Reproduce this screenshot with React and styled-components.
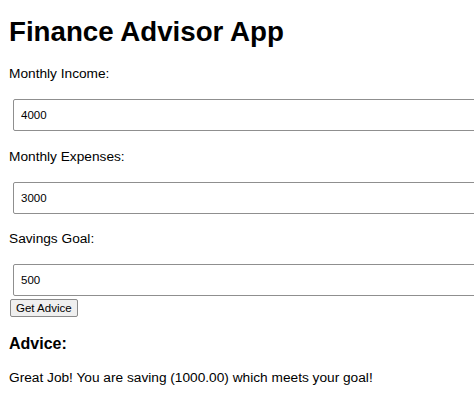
import React, { useState } from "react";
import styled, { createGlobalStyle } from "styled-components";

const GlobalStyle = createGlobalStyle`
  html, body {
    margin: 0;
    padding: 0;
    overflow: hidden;
    background: #ffffff;
  }
  body {
    font-family: "Liberation Sans", Arial, sans-serif;
    color: #000000;
  }
`;

const Page = styled.div`
  padding: 0 0 0 9px;
`;

const Title = styled.h1`
  font-size: 27.7px;
  font-weight: bold;
  line-height: 32px;
  margin: 16px 0 18px;
`;

const Form = styled.form`
  display: flex;
  flex-direction: column;
  align-items: flex-start;
`;

const Field = styled.div`
  width: 100%;
  margin-bottom: 14.5px;

  &:last-of-type {
    margin-bottom: 0;
  }
`;

const Label = styled.label`
  display: block;
  font-size: 13.7px;
  line-height: 16px;
  margin-bottom: 17px;
`;

const Input = styled.input`
  display: block;
  width: 100%;
  height: 30px;
  margin: 4px 0 3px 4px;
  padding: 0 7px;
  border: 1px solid #8f8f8f;
  border-radius: 2px;
  font-family: "Liberation Sans", Arial, sans-serif;
  font-size: 11.5px;
  color: #000000;
  background: #ffffff;
  outline: none;
`;

const Button = styled.button`
  margin: 0 0 0 1px;
  height: 18px;
  padding: 0 5px;
  border: 1px solid #8a8a8a;
  border-radius: 2px;
  background: #efefef;
  font-family: "Liberation Sans", Arial, sans-serif;
  font-size: 11.5px;
  line-height: 16px;
  color: #000000;
`;

const AdviceTitle = styled.h3`
  font-size: 16px;
  font-weight: bold;
  line-height: 18px;
  margin: 18px 0 17px;
`;

const AdviceText = styled.p`
  font-size: 13.7px;
  line-height: 16px;
  margin: 0;
`;

const fields = [
  { id: "income", label: "Monthly Income:", value: "4000" },
  { id: "expenses", label: "Monthly Expenses:", value: "3000" },
  { id: "goal", label: "Savings Goal:", value: "500" },
];

const App = () => {
  const [values, setValues] = useState(
    Object.fromEntries(fields.map((f) => [f.id, f.value]))
  );

  return (
    <Page>
      <GlobalStyle />
      <Title>Finance Advisor App</Title>

      {/* inputs */}
      <Form onSubmit={(e) => e.preventDefault()}>
        {fields.map((f) => (
          <Field key={f.id}>
            <Label htmlFor={f.id}>{f.label}</Label>
            <Input
              id={f.id}
              type="number"
              value={values[f.id]}
              onChange={(e) => setValues({ ...values, [f.id]: e.target.value })}
            />
          </Field>
        ))}
        <Button type="submit">Get Advice</Button>
      </Form>

      {/* result */}
      <AdviceTitle>Advice:</AdviceTitle>
      <AdviceText>
        Great Job! You are saving (1000.00) which meets your goal!
      </AdviceText>
    </Page>
  );
};

export default App;
